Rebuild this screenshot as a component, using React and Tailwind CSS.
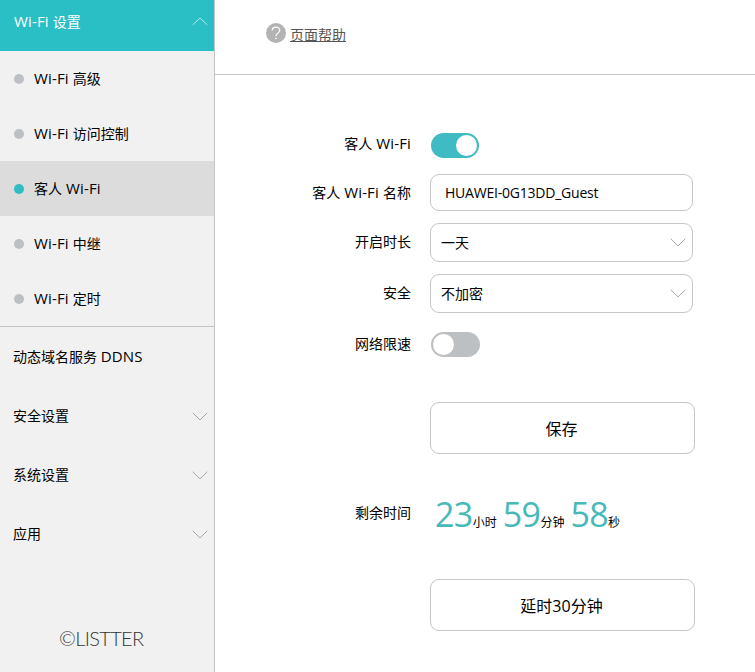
import { useState } from 'react';

const subItems = [
  { cn: '高级' },
  { cn: '访问控制' },
  { cn: '客人', first: true },
  { cn: '中继' },
  { cn: '定时' },
];

const menus = ['安全设置', '系统设置', '应用'];

function Chevron({ up, className = '' }) {
  return (
    <svg width="16" height="9" viewBox="0 0 16 9" fill="none" stroke="currentColor" className={`shrink-0 ${className}`}>
      <path d={up ? 'M0.7 8 L8 0.9 L15.3 8' : 'M0.7 0.8 L8 7.9 L15.3 0.8'} />
    </svg>
  );
}

function Latin({ children }) {
  return <span className="text-[15px] tracking-[0.15px]">{children}</span>;
}

function Switch({ on, onClick }) {
  return (
    <button
      onClick={onClick}
      className={`ml-px flex h-[25px] items-center rounded-full px-[2px] ${on ? 'w-12 justify-end bg-[#3fbbc3]' : 'w-[49px] justify-start bg-[#bdc0c2]'}`}
    >
      <span className="size-[21px] rounded-full bg-white" />
    </button>
  );
}

function Row({ label, className = '', labelClass = 'pb-[2px]', children }) {
  return (
    <div className={`flex items-center ${className}`}>
      <label className={`w-[196px] shrink-0 text-right whitespace-nowrap ${labelClass}`}>{label}</label>
      <div className="ml-[19px]">{children}</div>
    </div>
  );
}

function SelectBox({ value }) {
  return (
    <button className="flex h-[39px] w-[263px] items-center justify-between rounded-[9px] border border-[#c6c6c6] pr-[6px] pl-[10px]">
      <span>{value}</span>
      <Chevron className="text-[#a8a8a8]" />
    </button>
  );
}

function Sidebar() {
  const [active, setActive] = useState(2);
  return (
    <aside className="flex w-[215px] shrink-0 flex-col border-r border-[#c4c4c4] bg-[#f1f1f1]">
      <div className="flex h-[51px] items-center justify-between bg-[#2abec5] pr-[6px] pb-[8px] pl-[14px] text-white">
        <span><Latin>Wi-Fi </Latin>设置</span>
        <Chevron up className="text-[#b5eaec]" />
      </div>
      <nav className="border-b border-[#c4c4c4]">
        {subItems.map((item, i) => (
          <button
            key={item.cn}
            onClick={() => setActive(i)}
            className={`flex h-[55px] w-full items-center gap-[10px] pl-[14px] ${i === active ? 'bg-[#dcdcdc]' : ''}`}
          >
            <span className={`size-[10px] rounded-full ${i === active ? 'bg-[#2fbcc2]' : 'bg-[#bcbfc4]'}`} />
            <span>{item.first ? <>{item.cn}<Latin> Wi-Fi</Latin></> : <><Latin>Wi-Fi </Latin>{item.cn}</>}</span>
          </button>
        ))}
      </nav>
      <div className="flex h-[59px] items-center pl-[13px]"><span>动态域名服务 <Latin>DDNS</Latin></span></div>
      {menus.map((m) => (
        <div key={m} className="flex h-[59px] items-center justify-between pr-[6px] pl-[13px]">
          <span>{m}</span>
          <Chevron className="mt-px text-[#a8a8a8]" />
        </div>
      ))}
      <div className="mt-[61px] pl-[59px] font-['Lato','Open_Sans',sans-serif] text-[20px] leading-[28px] font-light tracking-[-0.65px] text-[#333]">©LISTTER</div>
    </aside>
  );
}

function Countdown() {
  const parts = [['23', '小时'], ['59', '分钟'], ['58', '秒']];
  return (
    <div className="flex gap-[6px] pl-[5px]">
      {parts.map(([n, unit]) => (
        <div key={unit} className="flex items-baseline">
          <span className="text-[34px] leading-[40px] tracking-[-0.6px] text-[#47b9b9]">{n}</span>
          <span className="text-[12px]">{unit}</span>
        </div>
      ))}
    </div>
  );
}

export default function App() {
  const [guest, setGuest] = useState(true);
  const [limit, setLimit] = useState(false);
  const [name, setName] = useState('HUAWEI-0G13DD_Guest');

  return (
    <div className="flex h-[672px] w-[755px] overflow-hidden bg-white font-['Open_Sans','Noto_Sans_CJK_SC',sans-serif] text-[14px] leading-[20px] text-black">
      <Sidebar />
      <main className="flex-1">
        <header className="flex h-[75px] items-start gap-1 border-b border-[#c4c4c4] pt-[23px] pl-[51px]">
          <svg width="20" height="20" viewBox="0 0 20 20" fill="none">
            <circle cx="10" cy="10" r="10" fill="#b3b3b3" />
            <path d="M6.2 7.6 C6.2 3 13.8 3 13.8 7.3 C13.8 10 10 9.8 10 13.2" stroke="#fff" strokeWidth="1.2" />
            <circle cx="10" cy="15.5" r="0.8" fill="#fff" />
          </svg>
          <a href="#" className="mt-[2px] text-[#555] underline underline-offset-1">页面帮助</a>
        </header>
        <div className="pt-[58px]">
          <Row label={<>客人<Latin> Wi-Fi</Latin></>} className="h-[25px]" labelClass="pb-[4px]">
            <Switch on={guest} onClick={() => setGuest(!guest)} />
          </Row>
          <Row label={<>客人<Latin> Wi-Fi </Latin>名称</>} className="mt-4 h-[37px]" labelClass="">
            <input
              value={name}
              onChange={(e) => setName(e.target.value)}
              className="block h-[37px] w-[263px] rounded-[9px] border border-[#c6c6c6] pl-[14px] text-[14px] tracking-[-0.22px]"
            />
          </Row>
          <Row label="开启时长" className="mt-3 h-[39px]"><SelectBox value="一天" /></Row>
          <Row label="安全" className="mt-3 h-[39px]" labelClass="pb-px"><SelectBox value="不加密" /></Row>
          <Row label="网络限速" className="mt-[19px] h-[25px]">
            <Switch on={limit} onClick={() => setLimit(!limit)} />
          </Row>
          <button className="mt-[45px] ml-[215px] block h-[52px] w-[265px] rounded-[9px] border border-[#c6c6c6] pt-[2px] pr-[2px] text-[16px]">保存</button>
          <Row label="剩余时间" className="h-[125px] pb-[6px]"><Countdown /></Row>
          <button className="ml-[215px] block h-[52px] w-[265px] rounded-[9px] border border-[#c6c6c6] pt-[2px] pr-[2px] text-[16px]">延时30分钟</button>
        </div>
      </main>
    </div>
  );
}
